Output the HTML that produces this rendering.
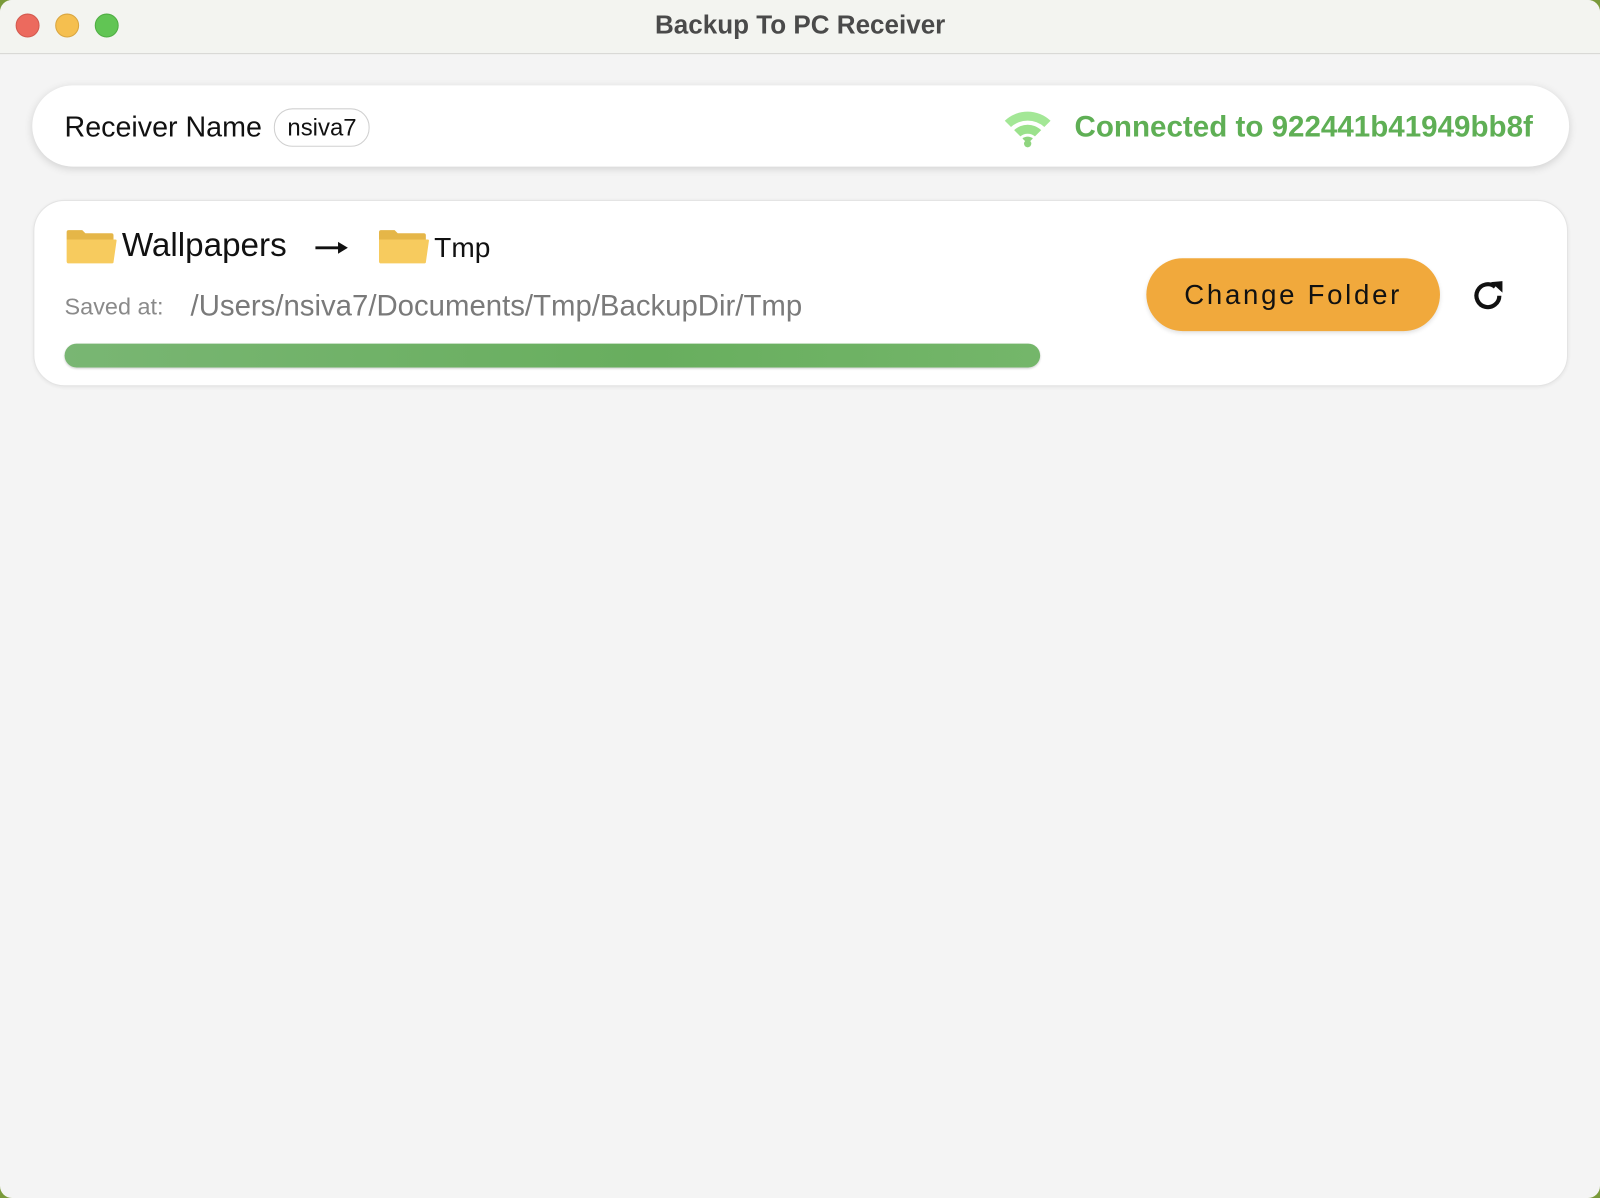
<!DOCTYPE html>
<html><head><meta charset="utf-8"><style>
*{margin:0;padding:0;box-sizing:border-box}
body{width:1600px;height:1198px;background:#7a9a3a;font-family:"Liberation Sans",sans-serif;overflow:hidden}
.win{position:absolute;left:0;top:0;width:1600px;height:1198px;background:#f4f4f4;border-radius:12px;overflow:hidden}
.in{position:absolute;left:0;top:0;width:1537px;height:1151px;transform:scale(1.0412);transform-origin:0 0}
.tb{height:52px;background:#f3f4f0;border-bottom:1px solid #d6d6d4;position:relative}
.dot{position:absolute;top:13px;width:23px;height:23px;border-radius:50%}
.title{position:absolute;top:0;left:0;width:100%;text-align:center;line-height:48px;font-size:25px;font-weight:bold;color:#4a4a4a}
.card{position:absolute;background:#fff;box-shadow:0 2px 8px rgba(0,0,0,.15)}
.c1{left:31px;top:82px;width:1476px;height:78px;border-radius:39px}
.c2{left:32px;top:192px;width:1474px;height:179px;border-radius:30px;border:1px solid #e4e4e4;box-shadow:0 1px 3px rgba(0,0,0,.06)}
.t{position:absolute;white-space:nowrap}
</style></head><body><div class="win"><div class="in">
<div class="tb">
<div class="dot" style="left:15px;background:#ec6a5e;border:1px solid #d35a4f"></div>
<div class="dot" style="left:53px;background:#f5bf4f;border:1px solid #d9a640"></div>
<div class="dot" style="left:91px;background:#61c554;border:1px solid #4fae43"></div>
<div class="title">Backup To PC Receiver</div>
</div>
<div class="card c1">
<div class="t" style="left:31px;top:24px;font-size:27.5px;color:#111">Receiver Name</div>
<div class="t" style="left:232px;top:22px;height:37px;padding:0 12px;border:1px solid #d0d0d0;border-radius:18px;font-size:23px;line-height:35px;color:#111">nsiva7</div>
<svg class="t" style="left:930px;top:20px" width="52" height="42" viewBox="0 0 52 42">
<path d="M4 14 A32 32 0 0 1 48 14 L42 20 A24 24 0 0 0 10 20Z" fill="#a3e796"/>
<path d="M13 23 A19 19 0 0 1 39 23 L33 29 A11 11 0 0 0 19 29Z" fill="#9be28c"/>
<path d="M21 31 A8 8 0 0 1 31 31 L26 36Z" fill="#8fd57f"/>
<circle cx="26" cy="36" r="3.5" fill="#8fd57f"/></svg>
<div class="t" style="left:1001px;top:24px;font-size:28.4px;font-weight:bold;color:#5faf55">Connected to 922441b41949bb8f</div>
</div>
<div class="card c2">
<svg class="t" style="left:30px;top:27px" width="50" height="34" viewBox="0 0 50 34"><path d="M1 3 Q1 1 3 1 H16 L19 4 H44 Q46 4 46 6 V10 H1Z" fill="#e5b648"/><path d="M1 10 H48 Q49 10 49 11 L46 32 Q46 33 44 33 H3 Q1 33 1 31Z" fill="#f7cb5e"/></svg>
<div class="t" style="left:84px;top:24px;font-size:31.9px;color:#111">Wallpapers</div>
<svg class="t" style="left:269px;top:38px" width="34" height="14" viewBox="0 0 36 14"><path d="M1 7 H30" stroke="#111" stroke-width="3"/><path d="M24 1 L34 7 L24 13Z" fill="#111"/></svg>
<div class="t" style="left:330px;top:27px"><svg width="50" height="34" viewBox="0 0 50 34"><path d="M1 3 Q1 1 3 1 H16 L19 4 H44 Q46 4 46 6 V10 H1Z" fill="#e5b648"/><path d="M1 10 H48 Q49 10 49 11 L46 32 Q46 33 44 33 H3 Q1 33 1 31Z" fill="#f7cb5e"/></svg></div>
<div class="t" style="left:384px;top:30px;font-size:27px;color:#111">Tmp</div>
<div class="t" style="left:29px;top:89px;font-size:22.5px;color:#8a8a8a">Saved at:</div>
<div class="t" style="left:150px;top:84px;font-size:28.2px;color:#7a7a7a">/Users/nsiva7/Documents/Tmp/BackupDir/Tmp</div>
<div class="t" style="left:29px;top:137px;width:937px;height:23px;border-radius:12px;background:linear-gradient(90deg,#79b673,#68ae5e 60%,#74b66a);box-shadow:0 1px 2px rgba(0,0,0,.2)"></div>
<div class="t" style="left:1068px;top:55px;width:282px;height:70px;border-radius:35px;background:#f1a93c;box-shadow:0 2px 4px rgba(0,0,0,.12);text-align:center;line-height:70px;font-size:26.5px;letter-spacing:2.6px;color:#111">Change Folder</div>
<svg class="t" style="left:1380px;top:74px" width="34" height="34" viewBox="0 0 34 34"><path d="M27 17 A11 11 0 1 1 23 8.5" fill="none" stroke="#111" stroke-width="4"/><path d="M19 4 L30 3 L30 14Z" fill="#111"/></svg>
</div>
</div></div></body></html>
